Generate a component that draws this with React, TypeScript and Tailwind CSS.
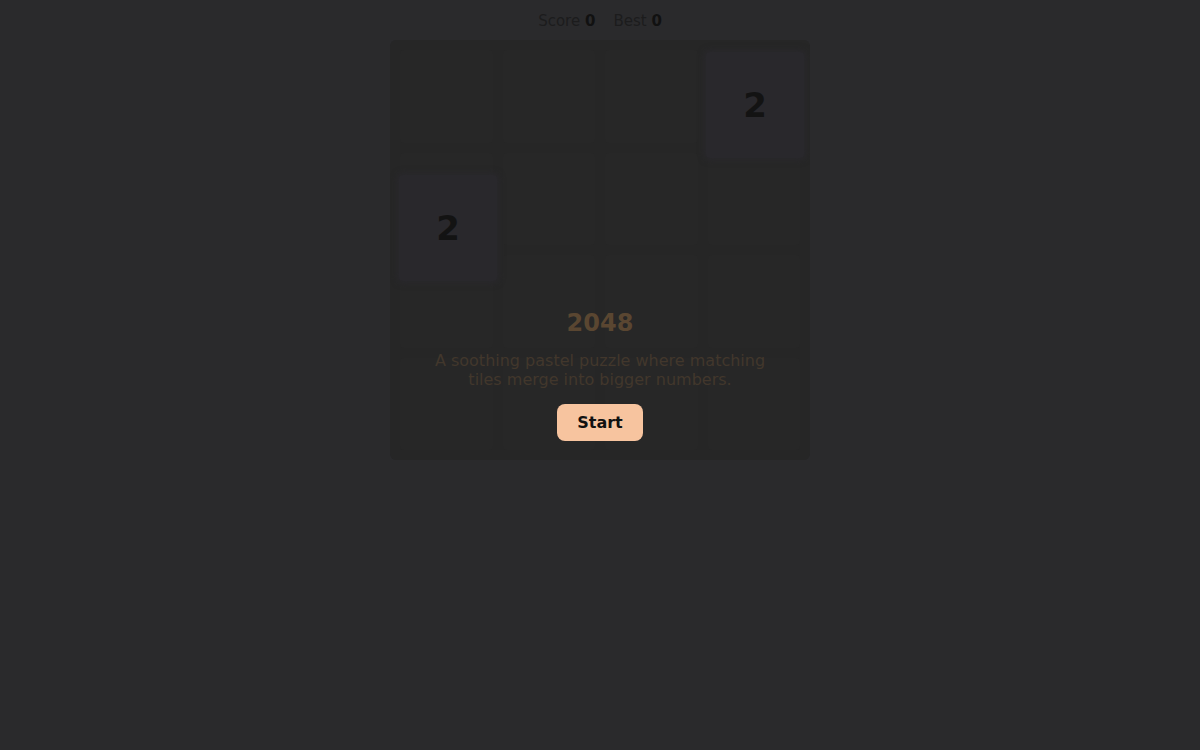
import React from 'react'

const font = "font-['DejaVu_Sans',_'Liberation_Sans',_sans-serif]"

const tiles = [
  { value: 2, left: 'left-[316px]', top: 'top-[12px]' },
  { value: 2, left: 'left-[9px]', top: 'top-[135px]' },
]

function Board() {
  return (
    <div className="relative h-[420px] w-[420px] overflow-hidden rounded-md bg-[#262626]">
      <div className="grid h-full w-full grid-cols-4 grid-rows-4 gap-[10px] p-[10px]">
        {Array.from({ length: 16 }).map((_, i) => (
          <div key={i} className="rounded-[4px] bg-[#272727]" />
        ))}
      </div>

      {tiles.map((t, i) => (
        <div
          key={i}
          className={`absolute ${t.left} ${t.top} flex h-[106px] w-[98px] items-center justify-center rounded-[4px] bg-[#29282c] text-[34px] font-bold text-[#131313] shadow-[0_0_6px_2px_#29282c]`}
        >
          {t.value}
        </div>
      ))}

      {/* start overlay */}
      <div className="absolute inset-0 flex flex-col items-center justify-end pb-[19px]">
        <h1 className="text-2xl font-bold leading-8 text-[#5a4631]">2048</h1>
        <p className="mt-3 max-w-[340px] text-center text-base leading-[19px] text-[#42372c]">
          A soothing pastel puzzle where matching tiles merge into bigger numbers.
        </p>
        <button className="mt-[15px] h-[37px] w-[86px] rounded-lg bg-[#f7c49f] text-base font-bold text-[#111]">
          Start
        </button>
      </div>
    </div>
  )
}

export default function App() {
  return (
    <div className={`min-h-screen w-full bg-[#2a2a2c] ${font}`}>
      <div className="flex flex-col items-center pt-2">
        <div className="flex h-6 items-center gap-[18px] pt-[2px] text-[15px] text-[#1c1c1d]">
          <span>
            Score <b className="text-[#111]">0</b>
          </span>
          <span>
            Best <b className="text-[#111]">0</b>
          </span>
        </div>
        <div className="mt-2">
          <Board />
        </div>
      </div>
    </div>
  )
}
